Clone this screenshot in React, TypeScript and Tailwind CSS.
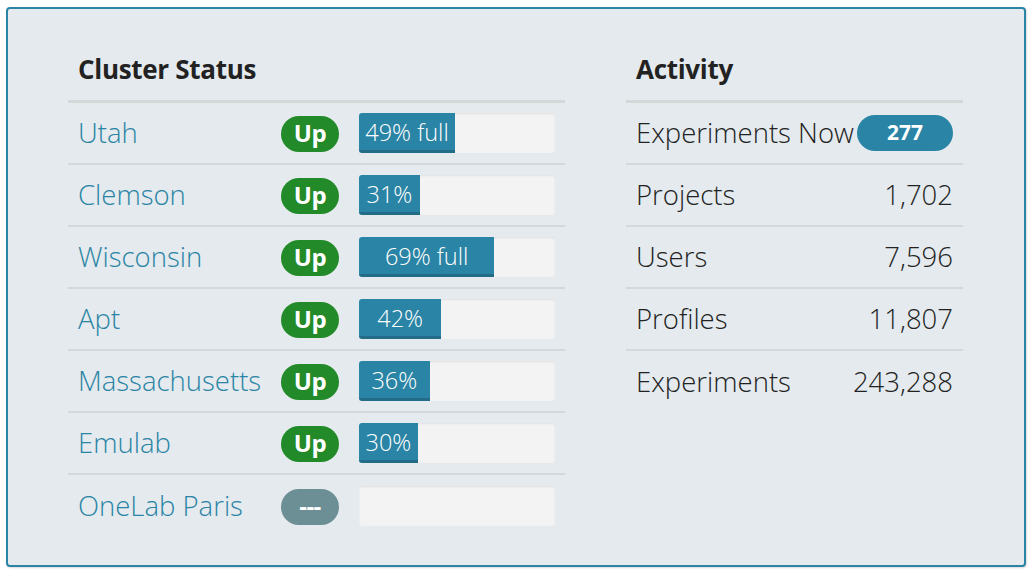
import React from 'react';

type Cluster = {
  name: string;
  up: boolean;
  pct: number | null;
  full?: boolean;
};

const clusters: Cluster[] = [
  { name: 'Utah', up: true, pct: 49, full: true },
  { name: 'Clemson', up: true, pct: 31 },
  { name: 'Wisconsin', up: true, pct: 69, full: true },
  { name: 'Apt', up: true, pct: 42 },
  { name: 'Massachusetts', up: true, pct: 36 },
  { name: 'Emulab', up: true, pct: 30 },
  { name: 'OneLab Paris', up: false, pct: null },
];

const activity = [
  { label: 'Projects', value: '1,702' },
  { label: 'Users', value: '7,596' },
  { label: 'Profiles', value: '11,807' },
  { label: 'Experiments', value: '243,288' },
];

function ProgressBar({ pct, full }: { pct: number | null; full?: boolean }) {
  return (
    <div className="h-[40px] w-full rounded-[3px] bg-[#f3f3f3] shadow-[inset_0_1px_2px_rgba(0,0,0,0.08)] overflow-hidden flex">
      {pct !== null && (
        <div
          className="h-full bg-[#2a84a5] shadow-[inset_0_-3px_0_rgba(0,0,0,0.18)] flex items-center justify-center text-white text-[23.5px] font-[350] leading-none whitespace-nowrap"
          style={{ width: `${pct}%` }}
        >
          {pct}%{full ? ' full' : ''}
        </div>
      )}
    </div>
  );
}

export default function App() {
  return (
    <div className="w-[1032px] h-[575px] bg-white pt-[7px] pl-[6px] font-['Open_Sans',sans-serif]">
      <div className="w-[1020px] h-[560px] border-2 border-[#2a84a5] rounded-[4px] bg-[#e4eaed] shadow-[1px_1px_2px_rgba(0,0,0,0.15)] flex gap-[61px] pl-[60px] pt-[40px]">
        <div className="w-[497px]">
          <h2 className="text-[26px] font-bold text-[#222] px-[10px] h-[54px] leading-[40px] tracking-[-0.3px] border-b-[3px] border-[#d5d8d9]">
            Cluster Status
          </h2>
          {clusters.map((c, i) => (
            <div
              key={c.name}
              className={`flex items-center h-[62px] ${i < clusters.length - 1 ? 'border-b-2 border-[#d5d8d9]' : ''}`}
            >
              <div className="w-[203px] pl-[10px] text-[27.5px] font-[350] text-[#2a84a5] whitespace-nowrap">
                {c.name}
              </div>
              <div className="w-[78px] pl-[10px] pt-[2px]">
                <span
                  className={`flex items-center justify-center w-[58px] h-[36px] rounded-full text-white font-bold text-[24px] leading-none pb-[2px] tracking-[-0.5px] ${c.up ? 'bg-[#238a2a]' : 'bg-[#6b8f94]'}`}
                >
                  {c.up ? 'Up' : '---'}
                </span>
              </div>
              <div className="w-[216px] pl-[10px] pr-[10px]">
                <ProgressBar pct={c.pct} full={c.full} />
              </div>
            </div>
          ))}
        </div>
        <div className="w-[337px]">
          <h2 className="text-[26px] font-bold text-[#222] px-[10px] h-[54px] leading-[40px] tracking-[-0.3px] border-b-[3px] border-[#d5d8d9]">
            Activity
          </h2>
          <div className="flex items-center justify-between h-[62px] border-b-2 border-[#d5d8d9] pl-[10px] pr-[10px]">
            <span className="text-[27.5px] font-[350] text-[#222] whitespace-nowrap">
              Experiments Now
            </span>
            <span className="flex items-center justify-center w-[96px] h-[36px] rounded-full bg-[#2a84a5] text-white font-bold text-[21px] leading-none pb-[2px]">
              277
            </span>
          </div>
          {activity.map((a, i) => (
            <div
              key={a.label}
              className={`flex items-center justify-between h-[62px] pl-[10px] pr-[10px] ${i < activity.length - 1 ? 'border-b-2 border-[#d5d8d9]' : ''}`}
            >
              <span className="text-[27.5px] font-[350] text-[#222]">{a.label}</span>
              <span className="text-[27.5px] font-[350] text-[#222]">{a.value}</span>
            </div>
          ))}
        </div>
      </div>
    </div>
  );
}
